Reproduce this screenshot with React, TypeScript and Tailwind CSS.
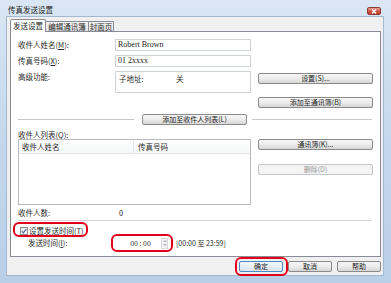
import React from 'react';

const cjk = '"Noto Sans CJK SC", "Noto Sans", sans-serif';

function Btn({ label, width, disabled, primary }: { label: string; width: number; disabled?: boolean; primary?: boolean }) {
  const tone = disabled
    ? 'border-[#c2c5c9] bg-[#f4f4f4] text-[#9a9a9a]'
    : primary
      ? 'border-[#4b8bc4] bg-linear-to-b from-[#f4f8fb] to-[#d9e4ee] text-[#1e1e1e]'
      : 'border-[#8a8a8a] bg-linear-to-b from-[#f6f6f6] via-[#ececec] to-[#d6d6d6] text-[#1e1e1e]';
  return (
    <div
      className={`h-[11px] shrink-0 rounded-[2px] border flex items-center justify-center text-[7px] leading-none ${tone}`}
      style={{ width }}
    >
      {label}
    </div>
  );
}

function Field({ value, serif }: { value: string; serif?: boolean }) {
  return (
    <div
      className="w-[136px] h-[12px] border border-[#cfd3d8] bg-white flex items-center pl-[2px] text-[8px] leading-none text-[#1e1e1e]"
      style={serif ? { fontFamily: '"Liberation Serif", serif' } : undefined}
    >
      {value}
    </div>
  );
}

function Ring({ className }: { className: string }) {
  return <div className={`absolute border-2 border-[#e3001b] rounded-[6px] pointer-events-none ${className}`} />;
}

export default function App() {
  return (
    <div
      className="w-[391px] h-[283px] flex flex-col bg-linear-to-b from-[#dae6f3] via-[#c4d7ec] to-[#b9cfe8] text-[#2a2a2a] overflow-hidden"
      style={{ fontFamily: cjk }}
    >
      {/* title bar */}
      <div className="h-[16px] shrink-0 flex items-start">
        <div className="ml-[8px] mt-[5px] text-[7.5px] leading-[9px] text-[#1b1b1b]">传真发送设置</div>
        <div className="ml-auto mr-[10px] mt-[7px] w-[14px] h-[8px] rounded-[2px] border border-[#8b3a35] bg-linear-to-b from-[#e8a296] via-[#cf5a47] to-[#c03a28] flex items-center justify-center">
          <svg width="6" height="5" viewBox="0 0 6 5">
            <path d="M1 0.5 L5 4.5 M5 0.5 L1 4.5" stroke="#fff" strokeWidth="1.3" />
          </svg>
        </div>
      </div>

      {/* client area */}
      <div className="ml-[6px] w-[378px] h-[260px] border border-[#a3b8d2] bg-[#f0f0f0] flex flex-col">
        {/* tabs */}
        <div className="h-[13px] mt-[2px] ml-[3px] flex items-end relative z-10">
          <div className="w-[36px] h-[13px] border border-b-0 border-[#898c95] bg-white rounded-t-[2px] flex items-center justify-center text-[7.5px] leading-none">
            发送设置
          </div>
          <div className="w-[43px] h-[10px] mb-[1px] border border-b-0 border-l-0 border-[#898c95] bg-linear-to-b from-[#f3f3f3] to-[#e3e3e3] flex items-center justify-center text-[7.5px] leading-none">
            编辑通讯簿
          </div>
          <div className="w-[25px] h-[10px] mb-[1px] border border-b-0 border-l-0 border-[#898c95] bg-linear-to-b from-[#f3f3f3] to-[#e3e3e3] flex items-center justify-center text-[7.5px] leading-none">
            封面页
          </div>
        </div>

        {/* tab panel */}
        <div className="ml-[3px] -mt-[1px] w-[371px] h-[226px] border border-[#898c95] bg-white flex flex-col pl-[7px] text-[7.5px] leading-none">
          {/* name */}
          <div className="mt-[7px] h-[12px] flex items-center">
            <div className="w-[97px]">收件人姓名(<span className="underline">M</span>):</div>
            <Field value="Robert Brown" serif />
          </div>
          {/* fax */}
          <div className="mt-[4px] h-[12px] flex items-center">
            <div className="w-[97px]">传真号码(<span className="underline">X</span>):</div>
            <Field value="01 2xxxx" serif />
          </div>
          {/* advanced */}
          <div className="mt-[4px] h-[22px] flex gap-[7px]">
            <div className="w-[233px] flex">
              <div className="w-[97px] pt-[2px]">高级功能:</div>
              <div className="w-[136px] h-[22px] border border-[#cfd3d8] flex pt-[3px] pl-[3px] text-[7.5px]">
                <span className="w-[57px]">子地址:</span>
                <span>关</span>
              </div>
            </div>
            <div className="mt-[2px]">
              <Btn label="设置(S)..." width={115} />
            </div>
          </div>
          {/* add to address book */}
          <div className="mt-[4px] h-[11px] flex gap-[7px]">
            <div className="w-[233px]" />
            <Btn label="添加至通讯簿(B)" width={115} />
          </div>
          {/* add to recipient list */}
          <div className="mt-[6px] h-[11px] flex items-center">
            <div className="w-[116px] h-px bg-[#c8c8c8]" />
            <div className="ml-[8px]">
              <Btn label="添加至收件人列表(L)" width={105} />
            </div>
            <div className="ml-[5px] w-[120px] h-px bg-[#c8c8c8]" />
          </div>
          {/* list label */}
          <div className="mt-[5px] h-[9px] flex items-center">收件人列表(<span className="underline">Q</span>):</div>
          {/* list */}
          <div className="h-[66px] flex gap-[7px]">
            <div className="w-[233px] h-[66px] border border-[#b8bcc2] bg-white flex flex-col">
              <div className="h-[14px] flex items-center border-b border-[#e2e4e7] bg-linear-to-b from-white to-[#f6f7f8]">
                <div className="w-[115px] h-full flex items-center pl-[3px] border-r border-[#e2e4e7]">收件人姓名</div>
                <div className="pl-[4px]">传真号码</div>
              </div>
            </div>
            <div className="flex flex-col">
              <Btn label="通讯簿(K)..." width={115} />
              <div className="mt-[14px]">
                <Btn label="删除(D)" width={115} disabled />
              </div>
            </div>
          </div>
          {/* count */}
          <div className="mt-[3px] h-[9px] flex items-center">
            <div className="w-[101px]">收件人数:</div>
            <div>0</div>
          </div>
          {/* separator */}
          <div className="mt-[3px] w-[354px] h-px bg-[#d4d4d4]" />
          {/* checkbox */}
          <div className="mt-[5px] h-[9px] flex items-center relative">
            <div className="ml-[2px] w-[8px] h-[8px] border border-[#8f8f8f] bg-linear-to-b from-[#e9e9e9] to-white flex items-center justify-center">
              <svg width="6" height="6" viewBox="0 0 6 6">
                <path d="M0.8 3.2 L2.4 4.8 L5.3 1" stroke="#4a5f97" strokeWidth="1.1" fill="none" />
              </svg>
            </div>
            <div className="ml-[1px]">设置发送时间(<span className="underline">T</span>)</div>
            <Ring className="-left-[5px] -top-[4px] w-[75px] h-[15px]" />
          </div>
          {/* time */}
          <div className="mt-[2px] h-[12px] flex items-center">
            <div className="ml-[10px] w-[85px]">发送时间(<span className="underline">I</span>):</div>
            <div className="relative w-[55px] h-[12px] flex items-center">
              <div className="w-[47px] text-center text-[7px] pl-[8px]">00 : 00</div>
              <div className="w-[7px] h-[11px] ml-[1px] border border-[#d6d8db] bg-[#f4f4f4] flex flex-col items-center justify-around">
                <svg width="4" height="2" viewBox="0 0 4 2"><path d="M0 2 L2 0 L4 2 Z" fill="#b0b0b0" /></svg>
                <svg width="4" height="2" viewBox="0 0 4 2"><path d="M0 0 L2 2 L4 0 Z" fill="#b0b0b0" /></svg>
              </div>
              <Ring className="-left-[2px] -top-[3px] w-[62px] h-[18px]" />
            </div>
            <div className="ml-[8px] text-[7px]">[00:00 至 23:59]</div>
          </div>
        </div>

        {/* dialog buttons */}
        <div className="mt-[4px] mr-[2px] flex justify-end gap-[5px]">
          <div className="relative">
            <Btn label="确定" width={44} primary />
            <Ring className="-left-[4px] -top-[4px] w-[53px] h-[19px]" />
          </div>
          <Btn label="取消" width={44} />
          <Btn label="帮助" width={44} />
        </div>
      </div>
    </div>
  );
}
